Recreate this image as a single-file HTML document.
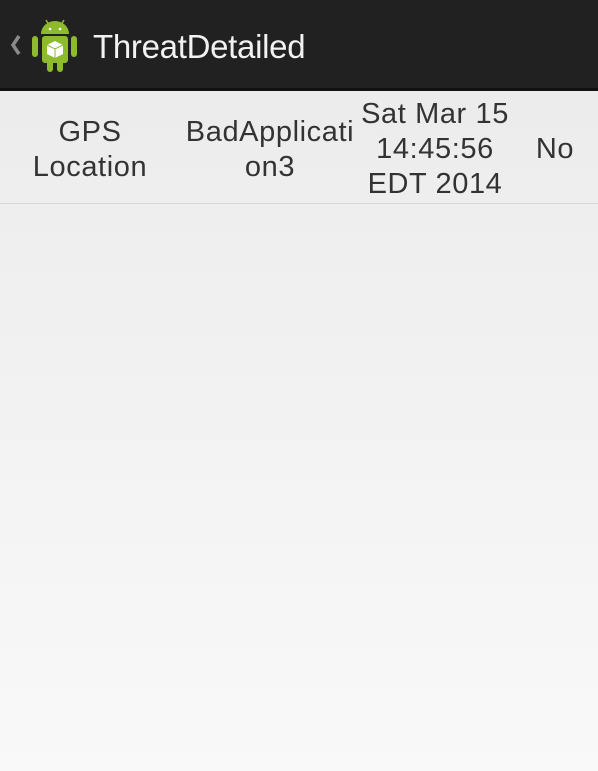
<!DOCTYPE html>
<html><head><style>
body{margin:0;width:598px;height:771px;overflow:hidden;font-family:"Liberation Sans",sans-serif;background:linear-gradient(#ececec 92px,#ececec 100px,#f9f9f9 771px);position:relative}
.bar{position:absolute;left:0;top:0;width:598px;height:88px;background:#212121;border-bottom:3px solid #111}
.title{position:absolute;left:93px;top:28px;font-size:33px;color:#f2f2f2;letter-spacing:-0.3px}
.c{position:absolute;text-align:center;font-size:29px;line-height:35px;color:#333;letter-spacing:0.6px}
.sep{position:absolute;left:0;top:203px;width:598px;height:1px;background:#d6d6d6}
</style></head><body>
<div class="bar">
<svg width="90" height="88" style="position:absolute;left:0;top:0">
<path d="M19 36 L13 45 L19 54" stroke="#8a8a8a" stroke-width="3.5" fill="none"/>
<g fill="#8dbb2c">
<path d="M41 34 A14 13 0 0 1 69 34 Z"/>
<rect x="42" y="36" width="26" height="27" rx="3"/>
<rect x="32" y="36" width="6" height="21" rx="3"/>
<rect x="71" y="36" width="6" height="21" rx="3"/>
<rect x="47" y="58" width="6" height="14" rx="3"/>
<rect x="57" y="58" width="6" height="14" rx="3"/>
</g>
<path d="M46 20 L49 25 M64 20 L61 25" stroke="#8dbb2c" stroke-width="1.5"/>
<circle cx="50" cy="29" r="1.3" fill="#fff"/><circle cx="60" cy="29" r="1.3" fill="#fff"/>
<path d="M55 41 L63 45 L63 54 L55 58 L47 54 L47 45 Z" fill="#fff"/>
<path d="M47 45 L55 49 L63 45 M55 49 L55 58" stroke="#8dbb2c" stroke-width="1" fill="none"/>
</svg>
<div class="title">ThreatDetailed</div>
</div>
<div class="c" style="left:10px;width:160px;top:115px">GPS<br>Location</div>
<div class="c" style="left:160px;width:220px;top:115px">BadApplicati<br>on3</div>
<div class="c" style="left:335px;width:200px;top:97px">Sat Mar 15<br>14:45:56<br>EDT 2014</div>
<div class="c" style="left:520px;width:70px;top:132px">No</div>
<div class="sep"></div>
</body></html>
